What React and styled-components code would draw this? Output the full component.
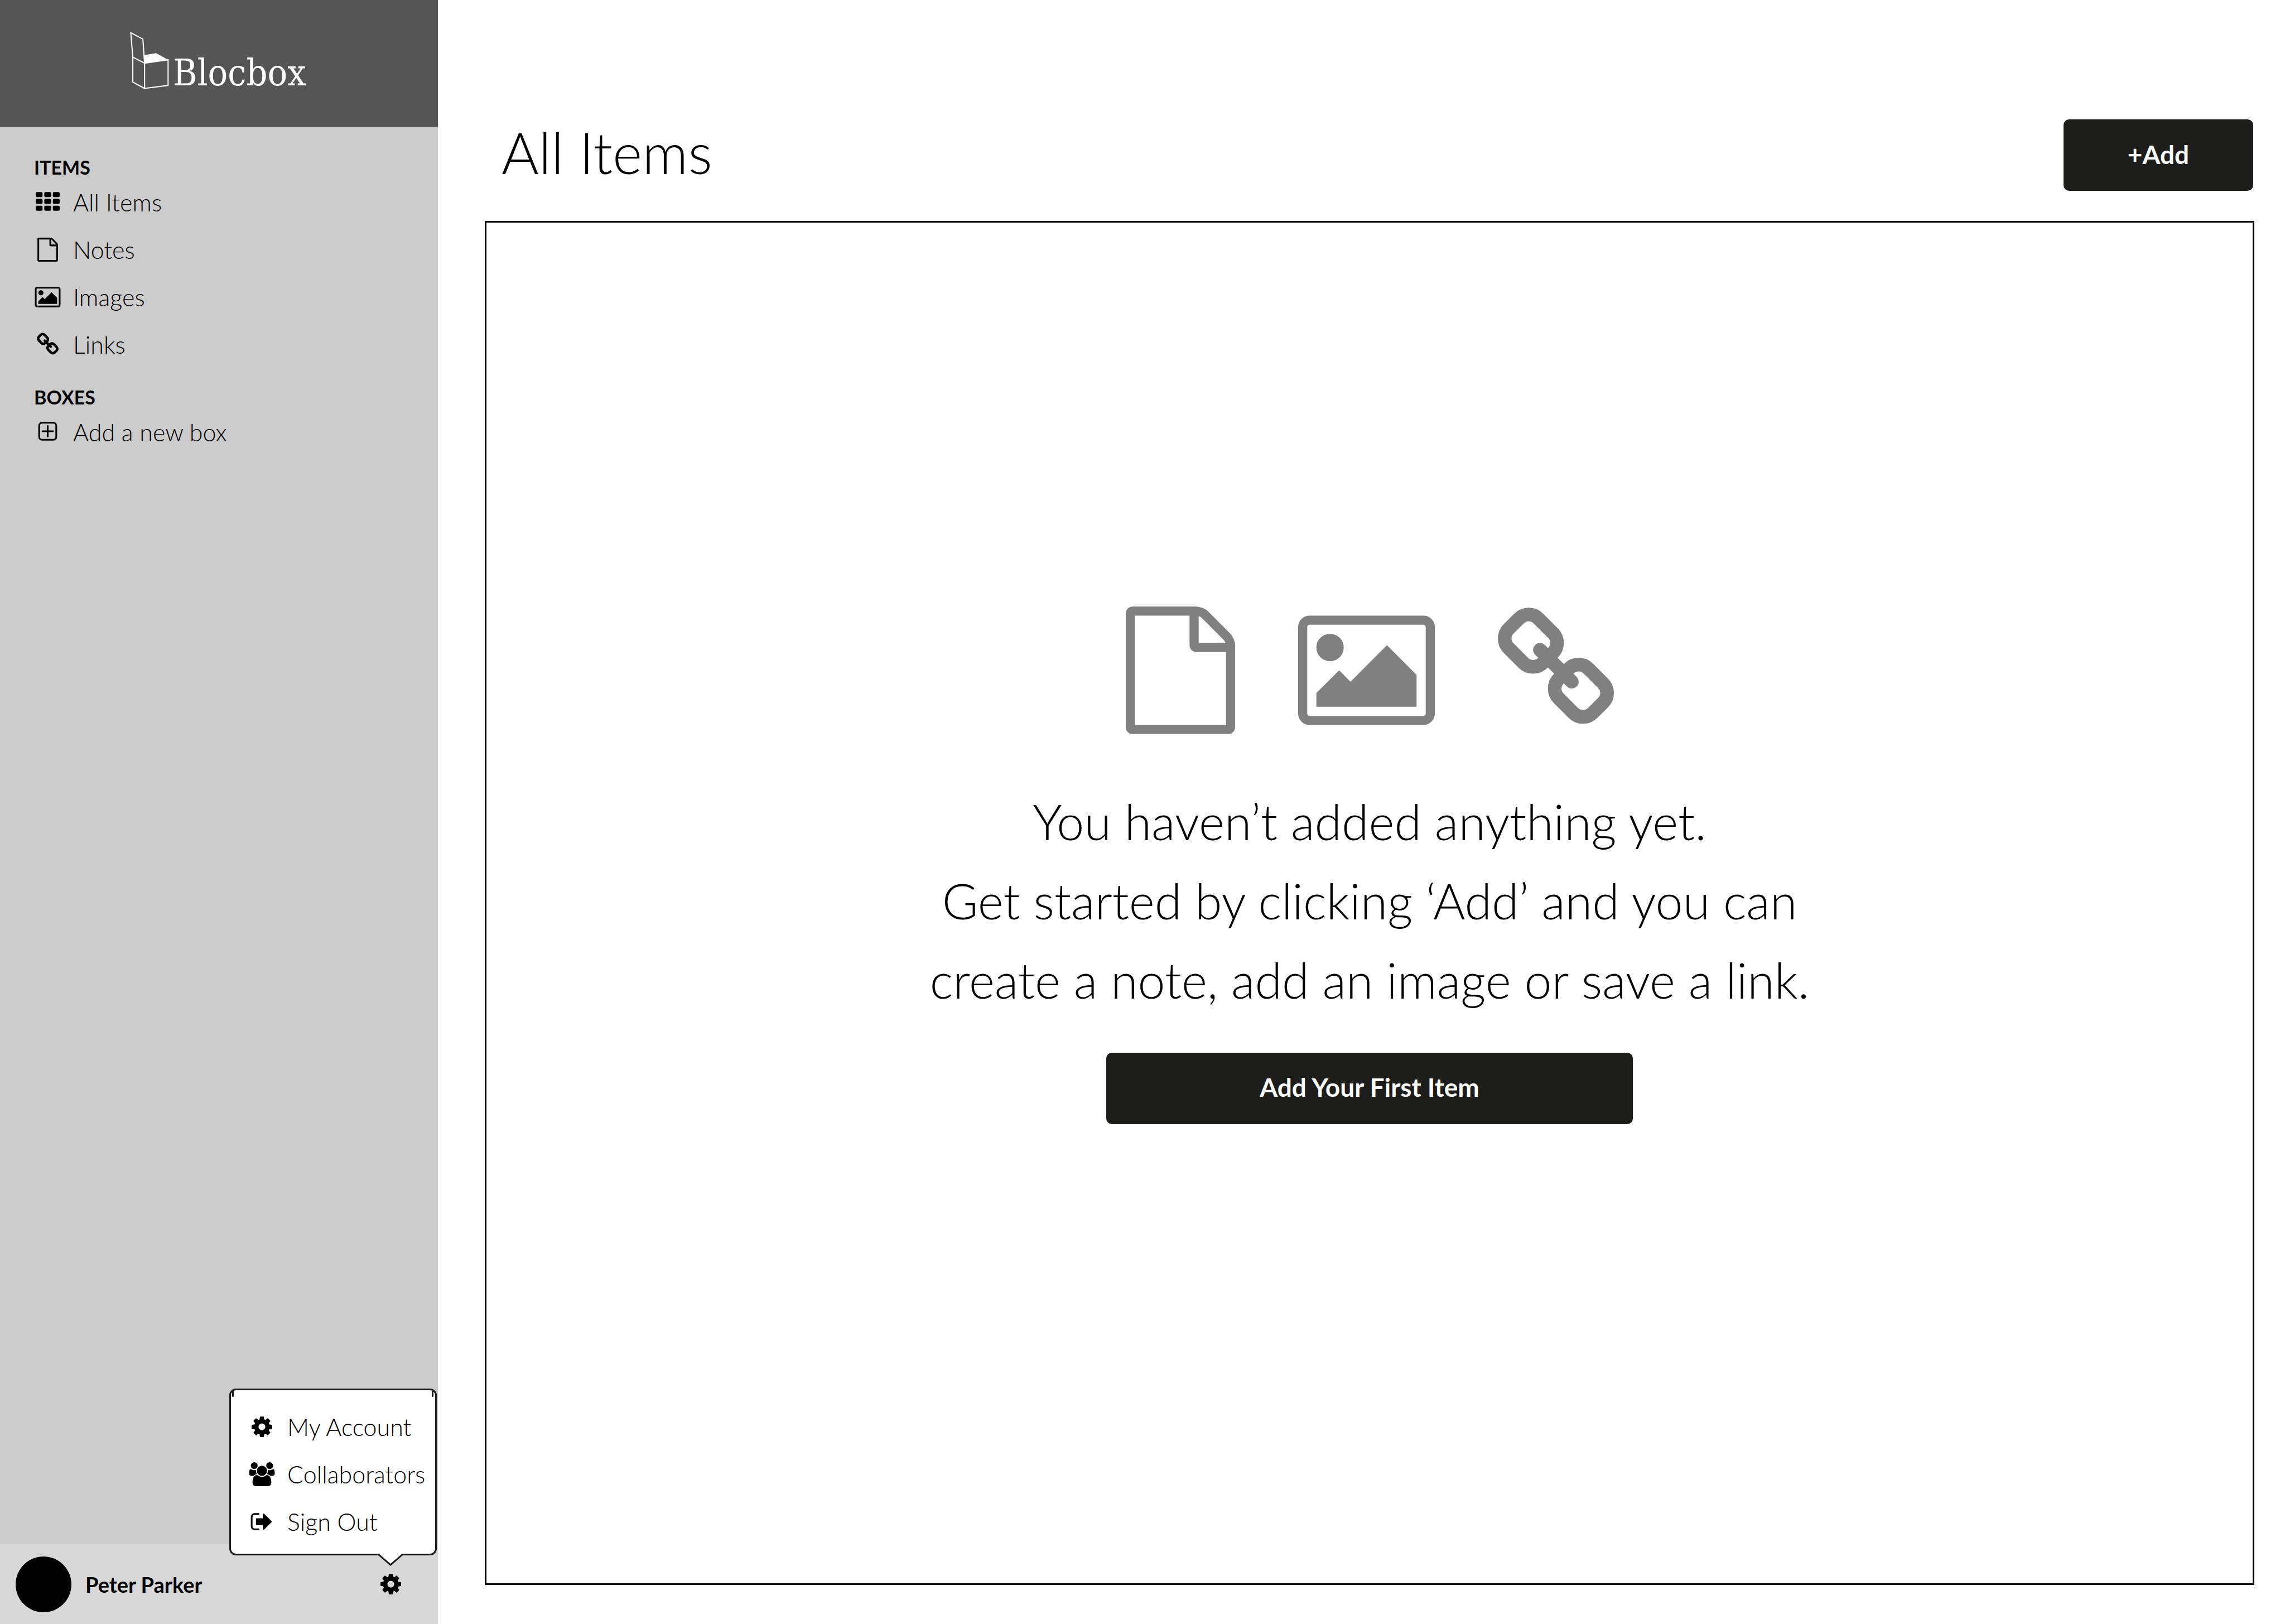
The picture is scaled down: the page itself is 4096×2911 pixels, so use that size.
import React from "react";
import styled, { createGlobalStyle } from "styled-components";

const ink = "#1d1d1b";

const GlobalStyle = createGlobalStyle`
  *, *::before, *::after { box-sizing: border-box; }
  body {
    margin: 0;
    background: #fff;
    color: #000;
    font-family: Lato, "Open Sans", sans-serif;
  }
  h1, h2, p, ul { margin: 0; padding: 0; }
  ul { list-style: none; }
`;

const Page = styled.div`
  display: grid;
  grid-template-columns: 785px 1fr;
  min-height: 100vh;
`;

const Sidebar = styled.aside`
  display: flex;
  flex-direction: column;
  background: #ccc;
`;

const Brand = styled.a`
  display: flex;
  align-items: flex-start;
  gap: 7px;
  height: 228px;
  padding: 56px 0 0 233px;
  background: #555;
  border-bottom: 1px solid #888;
  color: #fff;
  text-decoration: none;
`;

const BrandMark = styled.svg`
  width: 70px;
  height: 105px;
  fill: none;
  stroke: #fff;
  stroke-width: 3;
`;

const BrandName = styled.span`
  padding-top: 35px;
  font-family: "DejaVu Serif Condensed", "DejaVu Serif", serif;
  font-size: 66px;
  line-height: 80px;
`;

const Nav = styled.nav`
  display: flex;
  flex: 1;
  flex-direction: column;
  gap: 32px;
  padding: 52px 61px;
`;

const GroupTitle = styled.h2`
  font-size: 34px;
  font-weight: 700;
  line-height: 40px;
`;

const Entry = styled.a`
  display: flex;
  align-items: center;
  gap: 21px;
  color: #000;
  font-size: 43px;
  font-weight: 300;
  line-height: 85px;
  text-decoration: none;
  white-space: nowrap;
`;

const Glyph = styled.svg`
  flex: none;
  width: 49px;
  height: 43px;
  fill: currentColor;
`;

const UserBar = styled.footer`
  position: relative;
  display: flex;
  align-items: center;
  height: 143px;
  padding: 0 60px 0 28px;
  background: #d8d8d8;
`;

const Avatar = styled.span`
  width: 100px;
  height: 100px;
  border-radius: 50%;
  background: #000;
`;

const UserName = styled.span`
  flex: 1;
  padding-left: 25px;
  font-size: 38px;
  font-weight: 700;
`;

const IconButton = styled.button`
  display: flex;
  padding: 0;
  border: 0;
  background: none;
  color: #000;
  cursor: pointer;
`;

const Menu = styled.div`
  position: absolute;
  right: 2px;
  bottom: 123px;
  width: 372px;
  padding: 23px 0 15px 31px;
  border: 3px solid ${ink};
  border-radius: 12px;
  background: #fff;

  &::before,
  &::after {
    content: "";
    position: absolute;
    top: 0;
    width: 3px;
    height: 12px;
    border-radius: 0 0 2px 2px;
    background: ${ink};
  }
  &::before { left: 2px; }
  &::after { right: 3px; }
`;

const MenuTail = styled.svg`
  position: absolute;
  right: 57px;
  bottom: -23px;
  width: 46px;
  height: 23px;
  fill: #fff;
  stroke: ${ink};
  stroke-width: 3;
`;

const Main = styled.main`
  display: flex;
  flex-direction: column;
  gap: 54px;
  padding: 214px 55px 70px 84px;
`;

const TitleRow = styled.header`
  display: flex;
  align-items: center;
  justify-content: space-between;
  padding: 0 2px 0 30px;
`;

const Title = styled.h1`
  padding-bottom: 10px;
  font-size: 102px;
  font-weight: 300;
  line-height: 110px;
`;

const Button = styled.button`
  width: ${(p) => (p.$wide ? 944 : 340)}px;
  height: 128px;
  padding: 0 0 4px;
  border: 0;
  border-radius: 10px;
  background: ${ink};
  color: #fff;
  font: 700 46px Lato, "Open Sans", sans-serif;
  cursor: pointer;
`;

const Panel = styled.section`
  display: flex;
  flex: 1;
  flex-direction: column;
  align-items: center;
  justify-content: center;
  padding-bottom: 136px;
  border: 3px solid #000;
`;

const Kinds = styled.div`
  display: flex;
  gap: 113px;
  color: #808080;
`;

const KindIcon = styled.svg`
  width: ${(p) => p.$width}px;
  height: 229px;
  fill: currentColor;
`;

const Message = styled.p`
  margin: 85px 0 60px;
  font-size: 88px;
  font-weight: 300;
  line-height: 142px;
  text-align: center;
`;

const paths = {
  file: "M1596 380q28 28 48 76t20 88v1152q0 40-28 68t-68 28h-1344q-40 0-68-28t-28-68v-1600q0-40 28-68t68-28h896q40 0 88 20t76 48zm-444-244v376h376q-10-29-22-41l-313-313q-12-12-41-22zm384 1528v-1024h-416q-40 0-68-28t-28-68v-416h-768v1536h1280z",
  image:
    "M704 576q0 80-56 136t-136 56-136-56-56-136 56-136 136-56 136 56 56 136zm1024 384v448h-1408v-192l320-320 160 160 512-512zm96-704h-1600q-13 0-22.5 9.5t-9.5 22.5v1216q0 13 9.5 22.5t22.5 9.5h1600q13 0 22.5-9.5t9.5-22.5v-1216q0-13-9.5-22.5t-22.5-9.5zm160 32v1216q0 66-47 113t-113 47h-1600q-66 0-113-47t-47-113v-1216q0-66 47-113t113-47h1600q66 0 113 47t47 113z",
  link: "M1520 1216q0-40-28-68l-208-208q-28-28-68-28-42 0-72 32 3 3 19 18.5t21.5 21.5 15 19 13 25.5 3.5 27.5q0 40-28 68t-68 28q-15 0-27.5-3.5t-25.5-13-19-15-21.5-21.5-18.5-19q-33 31-33 73 0 40 28 68l206 207q27 27 68 27 40 0 68-26l147-146q28-28 28-67zm-703-705q0-40-28-68l-206-207q-28-28-68-28-39 0-68 27l-147 146q-28 28-28 67 0 40 28 68l208 208q27 27 68 27 42 0 72-31-3-3-19-18.5t-21.5-21.5-15-19-13-25.5-3.5-27.5q0-40 28-68t68-28q15 0 27.5 3.5t25.5 13 19 15 21.5 21.5 18.5 19q33-31 33-73zm895 705q0 120-85 203l-147 146q-83 83-203 83-121 0-204-85l-206-207q-83-83-83-203 0-123 88-209l-88-88q-86 88-208 88-120 0-204-84l-208-208q-84-84-84-204t85-203l147-146q83-83 203-83 121 0 204 85l206 207q83 83 83 203 0 123-88 209l88 88q86-88 208-88 120 0 204 84l208 208q84 84 84 204z",
  cog: "M1152 896q0-106-75-181t-181-75-181 75-75 181 75 181 181 75 181-75 75-181zm512-109v222q0 12-8 23t-20 13l-185 28q-19 54-39 91 35 50 107 138 10 12 10 25t-9 23q-27 37-99 108t-94 71q-12 0-26-9l-138-108q-44 23-91 38-16 136-29 186-7 28-36 28h-222q-14 0-24.5-8.5t-11.5-21.5l-28-184q-49-16-90-37l-141 107q-10 9-25 9-14 0-25-11-126-114-165-168-7-10-7-23 0-12 8-23 15-21 51-66.5t54-70.5q-27-50-41-99l-183-27q-13-2-21-12.5t-8-23.5v-222q0-12 8-23t19-13l186-28q14-46 39-92-40-57-107-138-10-12-10-24 0-10 9-23 26-36 98.5-107.5t94.5-71.5q13 0 26 10l138 107q44-23 91-38 16-136 29-186 7-28 36-28h222q14 0 24.5 8.5t11.5 21.5l28 184q49 16 90 37l142-107q9-9 24-9 13 0 25 10 129 119 165 170 7 8 7 22 0 12-8 23-15 21-51 66.5t-54 70.5q26 50 41 98l183 28q13 2 21 12.5t8 23.5z",
  users:
    "M657 896q-162 5-265 128h-134q-82 0-138-40.5t-56-118.5q0-353 124-353 6 0 43.5 21t97.5 42.5 119 21.5q67 0 133-23-5 37-5 66 0 139 81 256zm1071 637q0 120-73 189.5t-194 69.5h-874q-121 0-194-69.5t-73-189.5q0-53 3.5-103.5t14-109 26.5-108.5 43-97.5 62-81 85.5-53.5 111.5-20q10 0 43 21.5t73 48 107 48 135 21.5 135-21.5 107-48 73-48 43-21.5q61 0 111.5 20t85.5 53.5 62 81 43 97.5 26.5 108.5 14 109 3.5 103.5zm-1024-1277q0 106-75 181t-181 75-181-75-75-181 75-181 181-75 181 75 75 181zm704 384q0 159-112.5 271.5t-271.5 112.5-271.5-112.5-112.5-271.5 112.5-271.5 271.5-112.5 271.5 112.5 112.5 271.5zm576 225q0 78-56 118.5t-138 40.5h-134q-103-123-265-128 81-117 81-256 0-29-5-66 66 23 133 23 59 0 119-21.5t97.5-42.5 43.5-21q124 0 124 353zm-128-609q0 106-75 181t-181 75-181-75-75-181 75-181 181-75 181 75 75 181z",
  signOut:
    "M704 1440q0 4 1 20t.5 26.5-3 23.5-10 19.5-20.5 6.5h-320q-119 0-203.5-84.5t-84.5-203.5v-704q0-119 84.5-203.5t203.5-84.5h320q13 0 22.5 9.5t9.5 22.5q0 4 1 20t.5 26.5-3 23.5-10 19.5-20.5 6.5h-320q-66 0-113 47t-47 113v704q0 66 47 113t113 47h312l11.5 1 11.5 3 8 5.5 7 9 2 13.5zm928-544q0 26-19 45l-544 544q-19 19-45 19t-45-19-19-45v-288h-448q-26 0-45-19t-19-45v-384q0-26 19-45t45-19h448v-288q0-26 19-45t45-19 45 19l544 544q19 19 19 45z",
};

// Icons drawn on the 2048-unit grid; the others use the 1792-unit one and are centred in it.
const wide = ["image", "users"];

function Icon({ name }) {
  const left = wide.includes(name) ? 0 : -128;
  return (
    <Glyph viewBox={`${left} 0 2048 1792`} aria-hidden="true">
      {name === "grid" &&
        [128, 640, 1152].map((y) =>
          [0, 640, 1280].map((x) => (
            <rect key={`${x}-${y}`} x={x} y={y} width="512" height="384" rx="96" />
          ))
        )}
      {name === "plus" && (
        <>
          <rect x="256" y="192" width="1280" height="1280" rx="224" fill="none" stroke="currentColor" strokeWidth="128" />
          <rect x="448" y="768" width="896" height="128" rx="32" />
          <rect x="832" y="384" width="128" height="896" rx="32" />
        </>
      )}
      {paths[name] && <path d={paths[name]} />}
    </Glyph>
  );
}

function EntryList({ entries }) {
  return (
    <ul>
      {entries.map(([icon, label]) => (
        <li key={label}>
          <Entry href="#">
            <Icon name={icon} />
            {label}
          </Entry>
        </li>
      ))}
    </ul>
  );
}

export default function App() {
  return (
    <>
      <GlobalStyle />
      <Page>
        <Sidebar>
          <Brand href="#">
            <BrandMark viewBox="342 82 103 154" aria-hidden="true">
              <path d="M349.5 150 344 85.500 376 102.500 380.500 166ZM349.500 150V216L380.500 232.500 442.500 224.500V157L380.500 166V232.500" />
              <path d="M379.500 144.500 411 139.500 443 157 380.500 166Z" fill="#fff" stroke="none" />
            </BrandMark>
            <BrandName>Blocbox</BrandName>
          </Brand>
          <Nav>
            <div>
              <GroupTitle>ITEMS</GroupTitle>
              <EntryList
                entries={[
                  ["grid", "All Items"],
                  ["file", "Notes"],
                  ["image", "Images"],
                  ["link", "Links"],
                ]}
              />
            </div>
            <div>
              <GroupTitle>BOXES</GroupTitle>
              <EntryList entries={[["plus", "Add a new box"]]} />
            </div>
          </Nav>
          <UserBar>
            <Avatar />
            <UserName>Peter Parker</UserName>
            <IconButton type="button" aria-label="Settings">
              <Icon name="cog" />
            </IconButton>
            <Menu>
              <EntryList
                entries={[
                  ["cog", "My Account"],
                  ["users", "Collaborators"],
                  ["signOut", "Sign Out"],
                ]}
              />
              <MenuTail viewBox="0 0 46 23" aria-hidden="true">
                <path d="M0 -1 1 1 23 20 45 1 46 -1" />
              </MenuTail>
            </Menu>
          </UserBar>
        </Sidebar>
        <Main>
          <TitleRow>
            <Title>All Items</Title>
            <Button type="button">+Add</Button>
          </TitleRow>
          <Panel>
            <Kinds>
              <KindIcon $width={196} viewBox="128 0 1536 1792" aria-hidden="true">
                <path d={paths.file} />
              </KindIcon>
              <KindIcon $width={245} viewBox="64 0 1920 1792" aria-hidden="true">
                <path d={paths.image} />
              </KindIcon>
              <KindIcon $width={208} viewBox="80 0 1632 1792" aria-hidden="true">
                <path d={paths.link} />
              </KindIcon>
            </Kinds>
            <Message>
              You haven’t added anything yet.
              <br />
              Get started by clicking ‘Add’ and you can
              <br />
              create a note, add an image or save a link.
            </Message>
            <Button type="button" $wide>
              Add Your First Item
            </Button>
          </Panel>
        </Main>
      </Page>
    </>
  );
}
